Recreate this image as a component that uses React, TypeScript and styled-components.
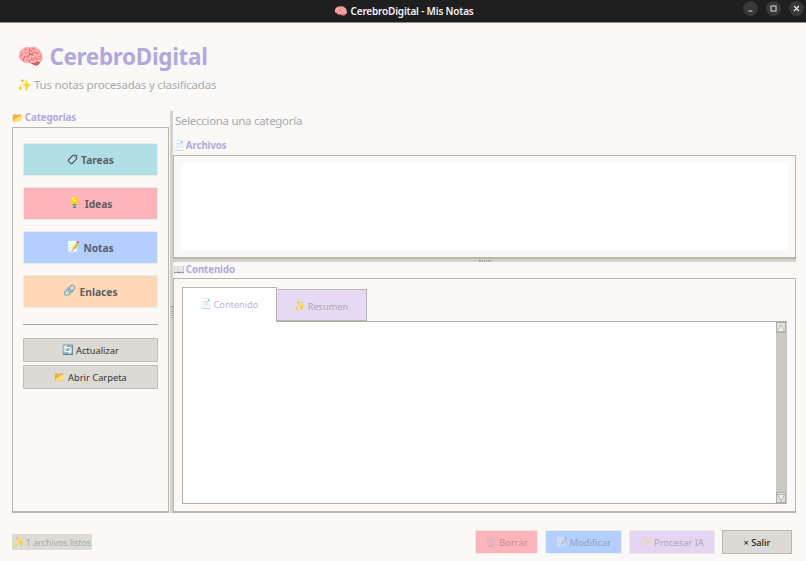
import React from 'react';
import styled, { createGlobalStyle } from 'styled-components';

const GlobalStyle = createGlobalStyle`
  html, body { margin: 0; padding: 0; }
  body {
    width: 806px;
    height: 561px;
    overflow: hidden;
    background: #faf9f7;
    font-family: "Noto Sans", "Open Sans", sans-serif;
  }
`;

const Window = styled.div`
  width: 806px;
  height: 561px;
  display: flex;
  flex-direction: column;
  background: #faf9f7;
`;

const TitleBar = styled.div`
  position: relative;
  height: 23px;
  box-sizing: border-box;
  flex: none;
  padding-left: 2px;
  background: #1f1f1f;
  border-bottom: 1px solid #8a8a86;
  display: flex;
  align-items: center;
  justify-content: center;
  color: #f4f4f4;
  font-size: 10px;
  font-weight: 600;
  letter-spacing: -0.18px;
`;

const WinControls = styled.div`
  position: absolute;
  right: 2px;
  top: 1px;
  display: flex;
  gap: 8px;
`;

const WinButton = styled.div`
  width: 15px;
  height: 15px;
  border-radius: 50%;
  background: #383838;
  display: flex;
  align-items: center;
  justify-content: center;
`;

const Header = styled.header`
  padding: 16px 0 0 17px;
  height: 88px;
  box-sizing: border-box;
  flex: none;
`;

const AppTitle = styled.h1`
  margin: 0;
  height: 36px;
  line-height: 36px;
  font-size: 22.5px;
  letter-spacing: -0.34px;
  font-weight: 700;
  color: #b3a8da;
  display: flex;
  align-items: center;
  gap: 5px;
`;

const Subtitle = styled.div`
  font-size: 11.5px;
  letter-spacing: -0.2px;
  line-height: 20px;
  color: #a9a9ab;
  display: flex;
  align-items: center;
  gap: 2px;
`;

const Main = styled.div`
  display: flex;
  padding: 0 10px 0 12px;
  height: 402px;
  flex: none;
`;

const Sidebar = styled.aside`
  width: 157px;
  flex: none;
  display: flex;
  flex-direction: column;
`;

const GroupLabel = styled.div<{ $low?: boolean }>`
  height: 16px;
  box-sizing: border-box;
  padding-bottom: ${(p) => (p.$low ? 1 : 3)}px;
  flex: none;
  font-size: 9.7px;
  letter-spacing: -0.1px;
  font-weight: 700;
  color: #b3a8da;
  display: flex;
  align-items: center;
  gap: 1px;
`;

const GroupBox = styled.div<{ $grow?: boolean; $height?: number }>`
  border: 1px solid #b8b7ac;
  border-bottom-width: 2px;
  box-sizing: border-box;
  ${(p) => (p.$height ? `height: ${p.$height}px; flex: none;` : '')}
  ${(p) => (p.$grow ? 'flex: 1; min-height: 0;' : '')}
`;

const SideBox = styled(GroupBox)`
  padding: 15px 10px;
  display: flex;
  flex-direction: column;
`;

const CategoryList = styled.div`
  display: flex;
  flex-direction: column;
  gap: 11px;
`;

const CategoryButton = styled.div<{ $bg: string }>`
  height: 33px;
  background: ${(p) => p.$bg};
  border: 1px solid #eeeae6;
  box-sizing: border-box;
  display: flex;
  align-items: center;
  justify-content: center;
  gap: 3px;
  font-size: 10.2px;
  font-weight: 700;
  color: #5d5d66;
`;

const Divider = styled.hr`
  width: 100%;
  margin: 16px 0 13px;
  border: none;
  border-top: 1px solid #a5a49e;
`;

const ActionList = styled.div`
  display: flex;
  flex-direction: column;
  gap: 3px;
`;

const ActionButton = styled.div`
  height: 24px;
  box-sizing: border-box;
  background: #dbdad5;
  border: 1px solid #bdbcb5;
  border-radius: 1px;
  display: flex;
  align-items: center;
  justify-content: center;
  gap: 2px;
  font-size: 9.3px;
  color: #333333;
`;

const VSplit = styled.div`
  width: 3px;
  flex: none;
  margin-left: 1px;
  background: #d3d2cc;
  display: flex;
  align-items: center;
  justify-content: center;
`;

const Grip = styled.div`
  width: 2px;
  height: 12px;
  border-left: 1px dotted #a8a7a0;
  border-right: 1px dotted #a8a7a0;
  box-sizing: border-box;
`;

const Content = styled.section`
  flex: 1;
  min-width: 0;
  display: flex;
  flex-direction: column;
`;

const Prompt = styled.div`
  height: 28px;
  flex: none;
  padding: 1px 0 0 2px;
  line-height: 18px;
  font-size: 11.5px;
  letter-spacing: -0.3px;
  color: #a9a9ab;
  box-sizing: border-box;
`;

const FilesBox = styled(GroupBox)`
  padding: 7px;
`;

const FilesList = styled.div`
  height: 100%;
  background: #ffffff;
`;

const HSplit = styled.div`
  height: 3px;
  flex: none;
  background: #d3d2cc;
  display: flex;
  justify-content: center;
  align-items: center;
`;

const HGrip = styled.div`
  width: 12px;
  height: 2px;
  border-top: 1px dotted #a8a7a0;
  border-bottom: 1px dotted #a8a7a0;
  box-sizing: border-box;
`;

const ContentBox = styled(GroupBox)`
  padding: 8px 8px 7px 8px;
  display: flex;
  flex-direction: column;
`;

const TabRow = styled.div`
  display: flex;
  align-items: flex-end;
  height: 35px;
  flex: none;
  margin-bottom: -1px;
  position: relative;
  z-index: 1;
`;

const Tab = styled.div<{ $active?: boolean }>`
  box-sizing: border-box;
  width: ${(p) => (p.$active ? 95 : 90)}px;
  height: ${(p) => (p.$active ? 35 : 32)}px;
  margin-bottom: ${(p) => (p.$active ? 0 : 1)}px;
  padding: ${(p) => (p.$active ? '0 0 2px' : '2px 0 0')};
  background: ${(p) => (p.$active ? '#ffffff' : '#e5daf2')};
  border: 1px solid #b8b7ac;
  border-bottom: ${(p) => (p.$active ? 'none' : '1px solid #b8b7ac')};
  border-left-width: ${(p) => (p.$active ? 1 : 0)}px;
  border-radius: 1px 1px 0 0;
  display: flex;
  align-items: center;
  justify-content: center;
  gap: 1px;
  font-size: 9.2px;
  color: ${(p) => (p.$active ? '#bcb2de' : '#a9a6b2')};
`;

const TextPane = styled.div`
  flex: 1;
  min-height: 0;
  background: #fff;
  border: 1px solid #b0afa6;
  border-right-color: #c9c8c1;
  display: flex;
  justify-content: flex-end;
`;

const Scrollbar = styled.div`
  width: 10px;
  background: #c9c8c2;
  display: flex;
  flex-direction: column;
  justify-content: space-between;
`;

const ScrollArrow = styled.div`
  height: 11px;
  background: #e2e1dc;
  border: 1px solid #b0afa6;
  box-sizing: border-box;
  display: flex;
  align-items: center;
  justify-content: center;
`;

const Footer = styled.footer`
  flex: 1;
  display: flex;
  align-items: center;
  justify-content: space-between;
  padding: 10px 14px 0 12px;
`;

const Status = styled.div`
  height: 16px;
  width: 80px;
  box-sizing: border-box;
  padding-left: 1px;
  background: #dcdbd6;
  display: flex;
  align-items: center;
  gap: 1px;
  font-size: 9px;
  letter-spacing: -0.1px;
  white-space: nowrap;
  color: #a9a9a6;
`;

const FooterActions = styled.div`
  display: flex;
  gap: 7px;
`;

const FooterButton = styled.div<{ $bg: string; $width: number; $strong?: boolean }>`
  width: ${(p) => p.$width}px;
  height: 24px;
  box-sizing: border-box;
  background: ${(p) => p.$bg};
  border: 1px solid ${(p) => (p.$strong ? '#b9b8b1' : '#eeeae6')};
  display: flex;
  align-items: center;
  justify-content: center;
  gap: 2px;
  font-size: 9.3px;
  font-weight: ${(p) => (p.$strong ? 500 : 400)};
  color: ${(p) => (p.$strong ? '#222222' : 'rgba(110, 110, 120, 0.5)')};
`;

const Emoji = styled.span<{ $size: number; $dim?: boolean }>`
  font-family: "Noto Color Emoji", "Noto Emoji", "DejaVu Sans", sans-serif;
  font-weight: 400;
  letter-spacing: 0;
  font-size: ${(p) => p.$size}px;
  line-height: 1;
  opacity: ${(p) => (p.$dim ? 0.7 : 1)};
`;

const TagIcon = () => (
  <svg width="11" height="11" viewBox="0 0 11 11" fill="none">
    <path
      d="M6 1.2h3.6v3.6L5 9.6a.8.8 0 0 1-1.1 0L1.4 7.1a.8.8 0 0 1 0-1.1Z"
      stroke="#4f4f57"
      strokeWidth="1.1"
      strokeLinejoin="round"
    />
    <circle cx="7.9" cy="2.9" r="0.6" fill="#4f4f57" />
  </svg>
);

export default function App() {
  return (
    <Window>
      <GlobalStyle />
      <TitleBar>
        <Emoji $size={11}>🧠</Emoji>&nbsp;CerebroDigital - Mis Notas
        <WinControls>
          <WinButton>
            <svg width="7" height="7" viewBox="0 0 7 7"><path d="M1.5 6h4" stroke="#ddd" strokeWidth="1" /></svg>
          </WinButton>
          <WinButton>
            <svg width="7" height="7" viewBox="0 0 7 7"><rect x="1" y="1" width="5" height="5" fill="none" stroke="#ddd" strokeWidth="1" /></svg>
          </WinButton>
          <WinButton>
            <svg width="7" height="7" viewBox="0 0 7 7"><path d="M1 1l5 5M6 1l-5 5" stroke="#eee" strokeWidth="1.1" /></svg>
          </WinButton>
        </WinControls>
      </TitleBar>
      <Header>
        <AppTitle><Emoji $size={22}>🧠</Emoji>CerebroDigital</AppTitle>
        <Subtitle><Emoji $size={12}>✨</Emoji>Tus notas procesadas y clasificadas</Subtitle>
      </Header>
      <Main>
        <Sidebar>
          <GroupLabel><Emoji $size={9.5}>📂</Emoji>Categorías</GroupLabel>
          <SideBox $grow>
            <CategoryList>
              <CategoryButton $bg="#b0e0e6"><TagIcon />Tareas</CategoryButton>
              <CategoryButton $bg="#ffb3ba"><Emoji $size={10.5}>💡</Emoji>Ideas</CategoryButton>
              <CategoryButton $bg="#b3cfff"><Emoji $size={10.5}>📝</Emoji>Notas</CategoryButton>
              <CategoryButton $bg="#ffd8b8"><Emoji $size={10.5}>🔗</Emoji>Enlaces</CategoryButton>
            </CategoryList>
            <Divider />
            <ActionList>
              <ActionButton><Emoji $size={9.5}>🔄</Emoji>Actualizar</ActionButton>
              <ActionButton><Emoji $size={9.5}>📂</Emoji>Abrir Carpeta</ActionButton>
            </ActionList>
          </SideBox>
        </Sidebar>
        <VSplit><Grip /></VSplit>
        <Content>
          <Prompt>Selecciona una categoría</Prompt>
          <GroupLabel><Emoji $size={9.5}>📄</Emoji>Archivos</GroupLabel>
          <FilesBox $height={104}>
            <FilesList />
          </FilesBox>
          <HSplit><HGrip /></HSplit>
          <GroupLabel $low><Emoji $size={9.5}>📖</Emoji>Contenido</GroupLabel>
          <ContentBox $grow>
            <TabRow>
              <Tab $active><Emoji $size={9.5}>📄</Emoji>Contenido</Tab>
              <Tab><Emoji $size={9.5}>✨</Emoji>Resumen</Tab>
            </TabRow>
            <TextPane>
              <Scrollbar>
                <ScrollArrow>
                  <svg width="8" height="8" viewBox="0 0 8 8"><path d="M4 1L7.5 7.5H0.5Z" fill="#f4f4f2" stroke="#8f8e88" strokeWidth="0.6" /></svg>
                </ScrollArrow>
                <ScrollArrow>
                  <svg width="8" height="8" viewBox="0 0 8 8"><path d="M4 7L7.5 0.5H0.5Z" fill="#f4f4f2" stroke="#8f8e88" strokeWidth="0.6" /></svg>
                </ScrollArrow>
              </Scrollbar>
            </TextPane>
          </ContentBox>
        </Content>
      </Main>
      <Footer>
        <Status><Emoji $size={9.5}>✨</Emoji>1 archivos listos</Status>
        <FooterActions>
          <FooterButton $bg="#ffb3ba" $width={63}><Emoji $size={9.5} $dim>🗑️</Emoji>Borrar</FooterButton>
          <FooterButton $bg="#b3cfff" $width={77}><Emoji $size={9.5} $dim>📝</Emoji>Modificar</FooterButton>
          <FooterButton $bg="#e5d5f2" $width={86}><Emoji $size={9.5} $dim>✨</Emoji>Procesar IA</FooterButton>
          <FooterButton $bg="#dbdad5" $width={70} $strong>× Salir</FooterButton>
        </FooterActions>
      </Footer>
    </Window>
  );
}
